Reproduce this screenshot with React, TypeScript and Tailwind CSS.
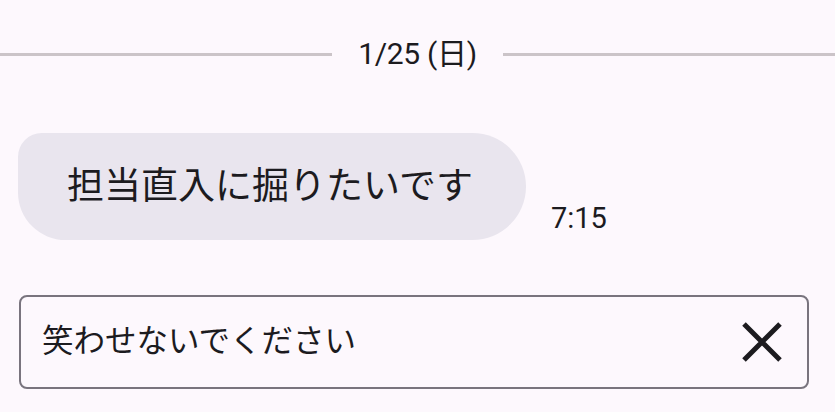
import React from 'react';

const font = { fontFamily: 'Roboto, "Noto Sans CJK JP", sans-serif' };

export default function App() {
  return (
    <div className="w-[835px] h-[412px] overflow-hidden bg-[#fdf8fd] text-[#1c1b1f] flex flex-col" style={font}>
      {/* date divider */}
      <div className="mt-[36px] flex items-center h-[36px]">
        <div className="flex-1 h-[3px] bg-[#cbc4c8]" />
        <div className="px-[26px] text-[30px] leading-[36px] tracking-[-0.3px]">1/25 (日)</div>
        <div className="flex-1 h-[3px] bg-[#cbc4c8]" />
      </div>

      {/* message */}
      <div className="mt-[61px] ml-[18px] flex items-end gap-[25px]">
        <div className="h-[107px] pl-[49px] pr-[53px] flex items-center bg-[#e9e5ee] rounded-tl-[24px] rounded-bl-[48px] rounded-r-[54px] text-[37px] leading-[48px]">
          担当直入に掘りたいです
        </div>
        <div className="mb-[4px] text-[29px] leading-[36px]">7:15</div>
      </div>

      {/* input */}
      <div className="mt-[55px] ml-[19px] w-[790px] h-[94px] border-2 border-[#79747e] rounded-[8px] flex items-center pl-[21px] pr-[24px]">
        <div className="flex-1 text-[31.5px] leading-[40px]">笑わせないでください</div>
        <svg width="42" height="42" viewBox="0 0 42 42" className="shrink-0">
          <path d="M3 3 L39 39 M39 3 L3 39" stroke="#1c1b1f" strokeWidth="5" fill="none" />
        </svg>
      </div>
    </div>
  );
}
